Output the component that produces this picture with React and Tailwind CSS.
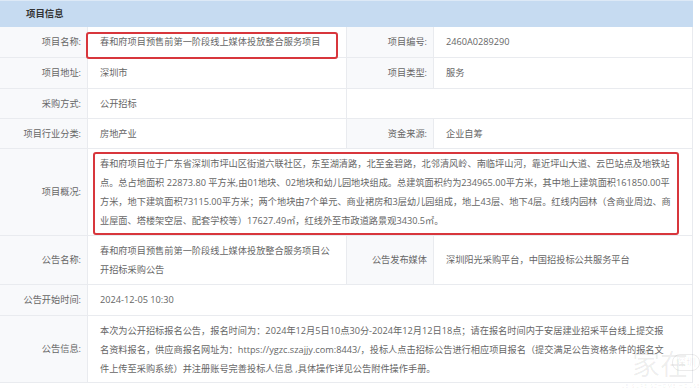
import React from "react";

const font = { fontFamily: '"Open Sans", "Noto Sans CJK SC", sans-serif' };

function Label({ children, className = "" }) {
  return (
    <div
      className={`flex items-center justify-end pr-[6px] bg-[#f8f9fb] border-b border-r border-[#e9ebef] text-[#666] whitespace-nowrap ${className}`}
    >
      {children}
    </div>
  );
}

function Value({ children, className = "" }) {
  return (
    <div
      className={`flex items-center pl-[12px] border-b border-r border-[#e9ebef] text-[#666] whitespace-nowrap ${className}`}
    >
      {children}
    </div>
  );
}

export default function App() {
  return (
    <div
      className="relative w-[700px] h-[391px] overflow-hidden bg-white text-[9.2px]"
      style={font}
    >
      <div className="w-[693px]">
        {/* Header */}
        <div className="h-[27px] flex items-center pl-[26px] bg-[#c6dbf1] border-t border-[#dde9f6] text-[#333] font-bold text-[9.4px]">
          项目信息
        </div>

        <div className="grid grid-cols-[88px_259px_87px_259px]">
          {/* row 1 */}
          <Label className="h-[31px]">项目名称:</Label>
          <Value className="h-[31px]">春和府项目预售前第一阶段线上媒体投放整合服务项目</Value>
          <Label className="h-[31px]">项目编号:</Label>
          <Value className="h-[31px]">2460A0289290</Value>

          {/* row 2 */}
          <Label className="h-[31px]">项目地址:</Label>
          <Value className="h-[31px]">深圳市</Value>
          <Label className="h-[31px]">项目类型:</Label>
          <Value className="h-[31px]">服务</Value>

          {/* row 3 */}
          <Label className="h-[30px]">采购方式:</Label>
          <Value className="h-[30px]">公开招标</Value>
          <Value className="h-[30px] col-span-2"></Value>

          {/* row 4 */}
          <Label className="h-[30px]">项目行业分类:</Label>
          <Value className="h-[30px]">房地产业</Value>
          <Label className="h-[30px]">资金来源:</Label>
          <Value className="h-[30px]">企业自筹</Value>

          {/* row 5 */}
          <Label className="h-[87px]">项目概况:</Label>
          <Value className="h-[87px] col-span-3 leading-[19px]">
            <div>
              <div>春和府项目位于广东省深圳市坪山区街道六联社区，东至湖清路，北至金碧路，北邻清风岭、南临坪山河，靠近坪山大道、云巴站点及地铁站</div>
              <div>点。总占地面积 22873.80 平方米,由01地块、02地块和幼儿园地块组成。总建筑面积约为234965.00平方米，其中地上建筑面积161850.00平</div>
              <div>方米，地下建筑面积73115.00平方米；两个地块由7个单元、商业裙房和3层幼儿园组成，地上43层、地下4层。红线内园林（含商业周边、商</div>
              <div>业屋面、塔楼架空层、配套学校等）17627.49㎡，红线外至市政道路景观3430.5㎡。</div>
            </div>
          </Value>

          {/* row 6 */}
          <Label className="h-[49px]">公告名称:</Label>
          <Value className="h-[49px] leading-[19px]">
            <div>
              <div>春和府项目预售前第一阶段线上媒体投放整合服务项目公</div>
              <div>开招标采购公告</div>
            </div>
          </Value>
          <Label className="h-[49px]">公告发布媒体</Label>
          <Value className="h-[49px]">深圳阳光采购平台，中国招投标公共服务平台</Value>

          {/* row 7 */}
          <Label className="h-[31px]">公告开始时间:</Label>
          <Value className="h-[31px] col-span-3">2024-12-05 10:30</Value>

          {/* row 8 */}
          <Label className="h-[67px]">公告信息:</Label>
          <Value className="h-[67px] col-span-3 leading-[19px]">
            <div>
              <div>本次为公开招标报名公告，报名时间为：2024年12月5日10点30分-2024年12月12日18点；请在报名时间内于安居建业招采平台线上提交报</div>
              <div>名资料报名，供应商报名网址为：https://ygzc.szajjy.com:8443/，投标人点击招标公告进行相应项目报名（提交满足公告资格条件的报名文</div>
              <div>件上传至采购系统）并注册账号完善投标人信息 ,具体操作详见公告附件操作手册。</div>
            </div>
          </Value>
        </div>
      </div>

      {/* red annotation boxes */}
      <div className="absolute left-[86px] top-[32px] w-[252px] h-[27px] border-2 border-[#d8363c] rounded-[3px]"></div>
      <div className="absolute left-[93px] top-[152px] w-[586px] h-[83px] border-2 border-[#d8363c] rounded-[3px]"></div>

      {/* watermark */}
      <div className="absolute left-[632px] top-[346px] flex items-start whitespace-nowrap text-[#000]/[0.07] pointer-events-none">
        <span className="text-[28px] leading-[34px]" style={{ fontFamily: '"Noto Sans CJK SC", sans-serif' }}>家在</span>
        <span className="mt-[8px] -ml-[16px] px-[3px] border border-[#000]/[0.08] rounded-[8px] text-[10px] leading-[15px]">深圳</span>
      </div>
      <div className="absolute left-[622px] top-[383px] text-[5px] tracking-[1px] text-[#000]/[0.08] whitespace-nowrap pointer-events-none">
        LEISURE SZHOME HOUSE
      </div>
    </div>
  );
}
